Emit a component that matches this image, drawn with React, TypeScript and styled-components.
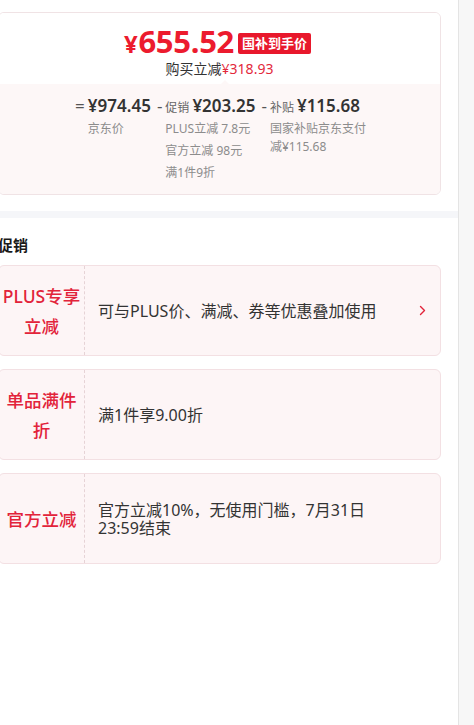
import React from 'react';
import styled, { createGlobalStyle } from 'styled-components';

const GlobalStyle = createGlobalStyle`
  html, body {
    margin: 0;
    padding: 0;
    background: #fff;
  }
  body {
    font-family: "Noto Sans", "Noto Sans CJK SC", sans-serif;
    color: #333;
  }
  * {
    box-sizing: border-box;
  }
`;

interface Promo {
  tag: string;
  text: string;
  link?: boolean;
}

const promos: Promo[] = [
  { tag: 'PLUS专享立减', text: '可与PLUS价、满减、券等优惠叠加使用', link: true },
  { tag: '单品满件折', text: '满1件享9.00折' },
  { tag: '官方立减', text: '官方立减10%，无使用门槛，7月31日23:59结束' },
];

function Chevron() {
  return (
    <svg width="7" height="11" viewBox="0 0 7 11" fill="none">
      <path d="M1.5 1.5l4 4-4 4" stroke="#e2233a" strokeWidth="1.4" strokeLinecap="round" strokeLinejoin="round" />
    </svg>
  );
}

export default function App() {
  return (
    <Page>
      <GlobalStyle />
      <Panel>
        <Summary>
          <PriceCard>
            <Head>
              <PriceLine>
                <Final>
                  <Yen>¥</Yen>655.52
                </Final>
                <Badge>国补到手价</Badge>
              </PriceLine>
              <Saving>
                购买立减<SavingValue>¥318.93</SavingValue>
              </Saving>
            </Head>
            <Breakdown>
              <Op>=</Op>
              <Col>
                <ColHead>
                  <Amount>¥974.45</Amount>
                </ColHead>
                <Details>
                  <Detail>京东价</Detail>
                </Details>
              </Col>
              <Op>-</Op>
              <Col>
                <ColHead>
                  <ColLabel>促销</ColLabel>
                  <Amount>¥203.25</Amount>
                </ColHead>
                <Details $gap={4}>
                  <Detail>PLUS立减 7.8元</Detail>
                  <Detail>官方立减 98元</Detail>
                  <Detail>满1件9折</Detail>
                </Details>
              </Col>
              <Op>-</Op>
              <Col $width={100}>
                <ColHead>
                  <ColLabel>补贴</ColLabel>
                  <Amount>¥115.68</Amount>
                </ColHead>
                <Details>
                  <Detail>国家补贴京东支付减¥115.68</Detail>
                </Details>
              </Col>
            </Breakdown>
          </PriceCard>
        </Summary>
        <Band />
        <PromoSection>
          <Title>促销</Title>
          <PromoList>
            {promos.map((p) => (
              <PromoCard key={p.tag}>
                <Tag>{p.tag}</Tag>
                <Desc $link={!!p.link}>{p.text}</Desc>
                {p.link && (
                  <Arrow>
                    <Chevron />
                  </Arrow>
                )}
              </PromoCard>
            ))}
          </PromoList>
        </PromoSection>
      </Panel>
      <Rail />
    </Page>
  );
}

const Page = styled.div`
  display: flex;
  width: 474px;
  min-height: 725px;
  overflow: hidden;
`;

const Panel = styled.div`
  flex: none;
  width: 472px;
  margin-left: -14px;
  background: #fff;
`;

const Rail = styled.div`
  flex: none;
  width: 16px;
  border-left: 1px solid #e4e4e4;
  background: #f7f7f7;
`;

const Summary = styled.div`
  padding: 12px 17px 16px 12px;
`;

const PriceCard = styled.div`
  border: 1px solid #f0e3e5;
  border-radius: 6px;
  overflow: hidden;
`;

const Head = styled.div`
  display: flex;
  flex-direction: column;
  align-items: center;
  padding: 13px 0 4px;
  background: #fff;
`;

const PriceLine = styled.div`
  display: flex;
  align-items: center;
  gap: 4px;
  height: 32px;
  margin-left: -4px;
`;

const Final = styled.span`
  font-size: 31px;
  font-weight: 700;
  color: #ec1b2e;
  line-height: 32px;
  letter-spacing: -0.3px;
`;

const Yen = styled.span`
  font-size: 24px;
  margin-right: 1px;
`;

const Badge = styled.span`
  background: #e8182c;
  color: #fff;
  font-size: 13px;
  font-weight: 700;
  line-height: 21px;
  padding: 0 4px;
  border-radius: 2px;
  margin-top: 2px;
`;

const Saving = styled.div`
  font-size: 14px;
  line-height: 22px;
  color: #333;
`;

const SavingValue = styled.span`
  color: #e3293b;
`;

const Breakdown = styled.div`
  position: relative;
  display: flex;
  justify-content: center;
  align-items: flex-start;
  padding: 10px 0 12px;
  background: #fdf7f7;

  &::before {
    content: '';
    position: absolute;
    top: -4px;
    left: 222px;
    border: 4px solid transparent;
    border-top: 0;
    border-bottom-color: #fdf7f7;
  }
`;

const Op = styled.span`
  font-size: 17px;
  line-height: 24px;
  color: #555;
  margin: 0 3px 0 6px;
`;

const Col = styled.div<{ $width?: number }>`
  display: flex;
  flex-direction: column;
  width: ${({ $width }) => ($width ? `${$width}px` : 'auto')};
`;

const ColHead = styled.div`
  display: flex;
  align-items: baseline;
  gap: 3px;
  height: 24px;
  white-space: nowrap;
`;

const ColLabel = styled.span`
  font-size: 12px;
  color: #666;
`;

const Amount = styled.span`
  font-size: 17px;
  font-weight: 600;
  color: #333;
  line-height: 24px;
`;

const Details = styled.div<{ $gap?: number }>`
  display: flex;
  flex-direction: column;
  gap: ${({ $gap }) => $gap || 0}px;
  margin-top: 2px;
`;

const Detail = styled.span`
  font-size: 12px;
  line-height: 18px;
  color: #8c8c8c;
`;

const Band = styled.div`
  height: 7px;
  background: #f5f6f9;
`;

const PromoSection = styled.div`
  padding: 16px 17px 0 12px;
`;

const Title = styled.h3`
  margin: 0;
  font-size: 15px;
  font-weight: 700;
  line-height: 22px;
  color: #1a1a1a;
`;

const PromoList = styled.div`
  display: flex;
  flex-direction: column;
  gap: 13px;
  margin-top: 9px;
`;

const PromoCard = styled.div`
  display: flex;
  align-items: stretch;
  height: 91px;
  background: #fdf5f6;
  border: 1px solid #f3e0e3;
  border-radius: 6px;
`;

const Tag = styled.div`
  flex: none;
  width: 86px;
  display: flex;
  align-items: center;
  justify-content: center;
  padding: 0 3px;
  text-align: center;
  font-size: 17.5px;
  line-height: 30px;
  font-weight: 500;
  color: #e2233a;
  border-right: 1px dashed #e6d3d6;
`;

const Desc = styled.div<{ $link: boolean }>`
  flex: 1;
  display: flex;
  align-items: center;
  padding: 0 ${({ $link }) => ($link ? 12 : 40)}px 0 13px;
  font-size: 16px;
  line-height: 18px;
  color: #333;
`;

const Arrow = styled.div`
  flex: none;
  display: flex;
  align-items: center;
  margin-right: 14px;
`;
